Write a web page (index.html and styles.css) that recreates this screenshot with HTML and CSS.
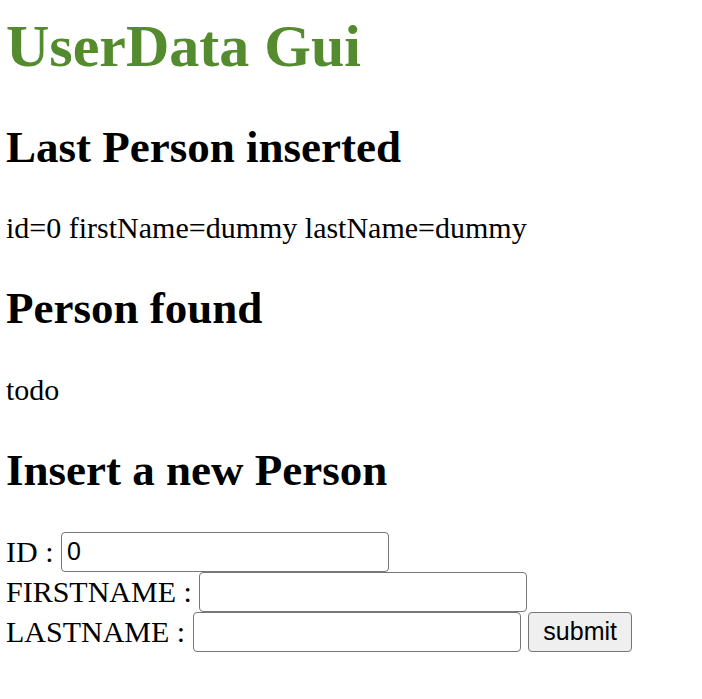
FILE: index.html
```html
<!DOCTYPE html>
<html lang="en">
<head>
<meta charset="utf-8">
<title>UserData Gui</title>
<link rel="stylesheet" href="styles.css">
</head>
<body class="page">
<h1 class="title">UserData Gui</h1>
<h2 class="section">Last Person inserted</h2>
<p class="text">id=0 firstName=dummy lastName=dummy</p>
<h2 class="section">Person found</h2>
<p class="text">todo</p>
<h2 class="section section-last">Insert a new Person</h2>
<form class="form">
  <div class="row"><label class="label" for="id">ID :</label><input class="field" id="id" type="text" value="0"></div>
  <div class="row"><label class="label" for="fn">FIRSTNAME :</label><input class="field" id="fn" type="text"></div>
  <div class="row"><label class="label" for="ln">LASTNAME :</label><input class="field" id="ln" type="text"><input class="btn" type="submit" value="submit"></div>
</form>
</body>
</html>
```
FILE: styles.css
```css
html, body {
  background: #ffffff;
}
.page {
  margin: 0 6px;
  padding: 0;
  font-family: "Liberation Serif", "Times New Roman", serif;
  font-size: 30px;
  line-height: 1.15;
  color: #000000;
}
.title {
  margin: 12px 0 41px 0;
  font-size: 60px;
  font-weight: bold;
  line-height: 1.15;
  color: #558b2f;
}
.section {
  margin: 37.5px 0;
  font-size: 45px;
  font-weight: bold;
  line-height: 1.15;
}
.section-last {
  margin-bottom: 35.5px;
}
.text {
  margin: 37px 0;
  font-size: 30px;
}
.form {
  margin: 0;
}
.row {
  display: flex;
  align-items: flex-start;
  gap: 7.5px;
}
.label {
  white-space: nowrap;
  padding-top: 3px;
  line-height: 1.15;
}
.field {
  box-sizing: border-box;
  width: 328px;
  height: 40px;
  margin: 0;
  padding: 0 5px;
  border: 1px solid #767676;
  border-radius: 4px;
  background: #ffffff;
  font-family: "Liberation Sans", Arial, sans-serif;
  font-size: 25px;
  color: #000000;
}
.btn {
  box-sizing: border-box;
  width: 104px;
  height: 40px;
  margin: 0;
  padding: 0 12px;
  border: 1px solid #767676;
  border-radius: 4px;
  background: #efefef;
  font-family: "Liberation Sans", Arial, sans-serif;
  font-size: 25px;
  color: #000000;
}
```
